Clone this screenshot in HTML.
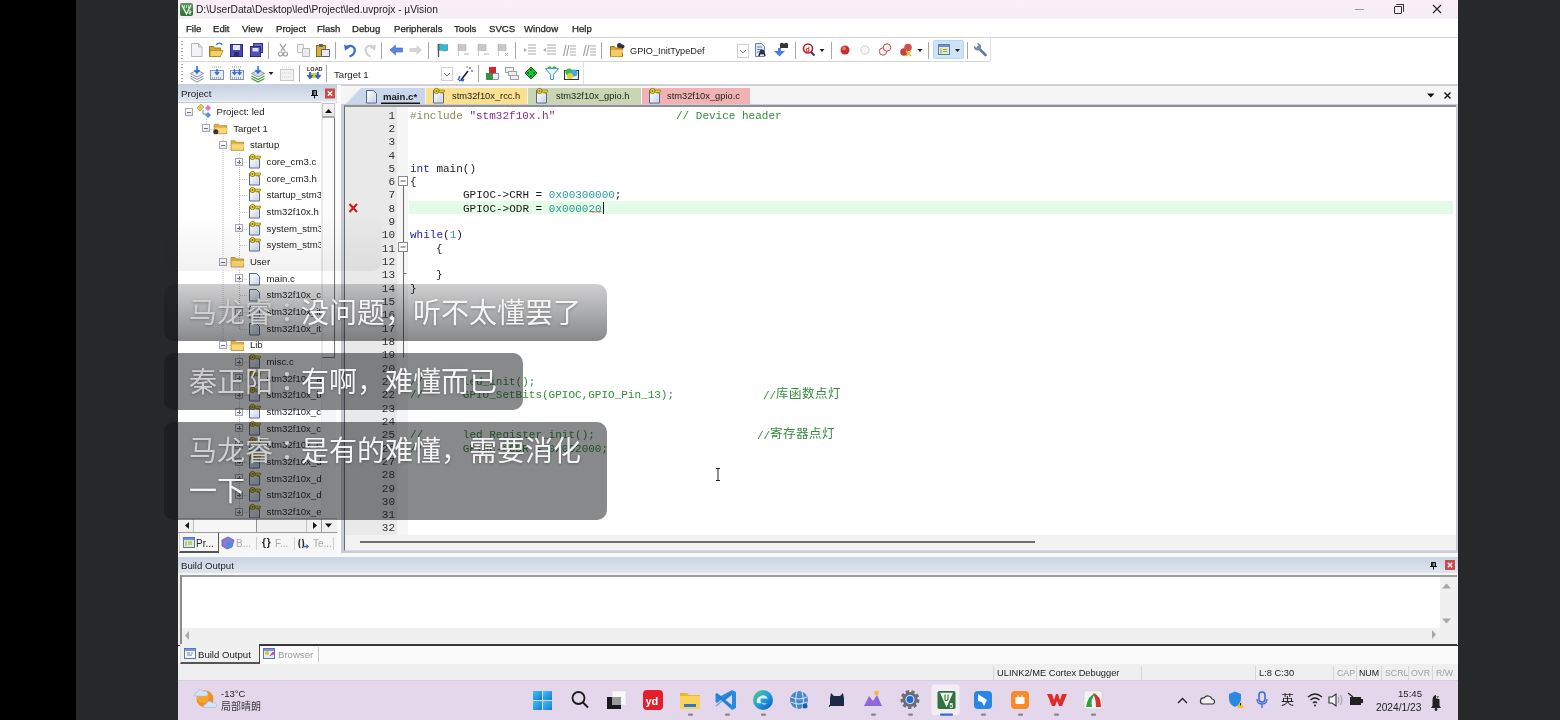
<!DOCTYPE html>
<html lang="zh-CN"><head><meta charset="utf-8">
<style>
*{margin:0;padding:0;box-sizing:border-box}
html,body{width:1560px;height:720px;overflow:hidden;background:#000;will-change:transform;font-family:"Liberation Sans",sans-serif;font-size:10px;color:#222}
.a{position:absolute}
.t{position:absolute;white-space:nowrap;line-height:1}
.m{position:absolute;white-space:pre;line-height:1;font-family:"Liberation Mono",monospace;font-size:11px}
svg{position:absolute;overflow:visible}
.sep{position:absolute;width:1px;background:#a8a8a8}
.ln{position:absolute;left:369px;width:26px;text-align:right;font-family:"Liberation Mono",monospace;font-size:11px;line-height:1;color:#333}
.tr{position:absolute;white-space:nowrap;line-height:1.3;font-size:9.6px;color:#222;overflow:hidden;right:1239px}
.exp{position:absolute;width:8px;height:8px;border:1px solid #a8a8ac;background:linear-gradient(#fff,#e6e8f0)}
.exp:before{content:"";position:absolute;left:1px;top:2.5px;width:4px;height:1px;background:#6a7088}
.exp.p:after{content:"";position:absolute;left:2.5px;top:1px;width:1px;height:4px;background:#6a7088}
.fi{position:absolute;width:11px;height:13px;border:1px solid #5b6b8a;background:linear-gradient(135deg,#fff,#cdd6e6);border-radius:1px}
.key{position:absolute;width:9px;height:5px}
.key:before{content:"";position:absolute;left:0;top:0;width:5px;height:5px;border-radius:50%;background:#f4f0c0;border:1.5px solid #c8b418}
.key:after{content:"";position:absolute;left:5px;top:2px;width:5px;height:3px;border-top:1.5px solid #c0ac18;border-right:1px solid #c0ac18}
.fold{position:absolute;width:9px;height:9px;border:1px solid #888;background:#fff}
.fold:before{content:"";position:absolute;left:1px;top:3px;width:5px;height:1px;background:#555}
.sub{position:absolute;border-radius:10px;background:rgba(40,40,42,.55)}
.subt{position:absolute;white-space:nowrap;line-height:1;color:#f4f4f4;font-size:28px;text-shadow:0 1px 3px rgba(0,0,0,.3)}
</style></head><body>
<div class="a" style="left:76px;top:0;width:1484px;height:720px;background:#27282a"></div>
<div class="a" style="left:178px;top:0;width:1280px;height:720px;background:#f0f0f0"></div>

<!-- ============ TITLE BAR ============ -->
<div class="a" style="left:178px;top:0;width:1280px;height:19px;background:linear-gradient(#fcedf8,#f4eef4)"></div>
<div class="a" style="left:180px;top:3px;width:13px;height:13px;border-radius:2px;background:linear-gradient(#5a9a5a,#2f6e35)"></div>
<svg style="left:0;top:0" width="1560" height="720"><path d="M182 5l4.5 9 4.5-9" fill="none" stroke="#e8f4e0" stroke-width="1.4"/><path d="M184.5 5v3M186.5 5v3M188.5 5v3" stroke="#d0e8d0" stroke-width=".8"/><path d="M189 11h2v1.5h-2v1.5h2" fill="none" stroke="#fff" stroke-width=".8"/></svg>
<div class="t" style="left:196px;top:5px;font-size:10.2px;color:#1c1c1c">D:\UserData\Desktop\led\Project\led.uvprojx - µVision</div>
<div class="a" style="left:1355px;top:9px;width:9px;height:1px;background:#9a9a9a"></div>
<div class="a" style="left:1394px;top:6px;width:8px;height:8px;border:1px solid #333;border-radius:1px"></div>
<div class="a" style="left:1396px;top:4px;width:8px;height:8px;border-top:1px solid #333;border-right:1px solid #333;border-radius:1px"></div>
<svg style="left:1432px;top:4px" width="10" height="10"><path d="M1 1L9 9M9 1L1 9" stroke="#222" stroke-width="1.1"/></svg>

<!-- ============ MENU BAR ============ -->
<div class="a" style="left:178px;top:19px;width:1280px;height:19px;background:#fff"></div>
<div class="a" style="left:178px;top:37px;width:1280px;height:2px;background:#d8d8d8"></div>
<div class="t" style="left:186px;top:24px;font-size:9.6px;color:#1e1e1e;-webkit-text-stroke:.25px #1e1e1e">File</div>
<div class="t" style="left:213px;top:24px;font-size:9.6px;color:#1e1e1e;-webkit-text-stroke:.25px #1e1e1e">Edit</div>
<div class="t" style="left:242px;top:24px;font-size:9.6px;color:#1e1e1e;-webkit-text-stroke:.25px #1e1e1e">View</div>
<div class="t" style="left:276px;top:24px;font-size:9.6px;color:#1e1e1e;-webkit-text-stroke:.25px #1e1e1e">Project</div>
<div class="t" style="left:317px;top:24px;font-size:9.6px;color:#1e1e1e;-webkit-text-stroke:.25px #1e1e1e">Flash</div>
<div class="t" style="left:352px;top:24px;font-size:9.6px;color:#1e1e1e;-webkit-text-stroke:.25px #1e1e1e">Debug</div>
<div class="t" style="left:394px;top:24px;font-size:9.6px;color:#1e1e1e;-webkit-text-stroke:.25px #1e1e1e">Peripherals</div>
<div class="t" style="left:454px;top:24px;font-size:9.6px;color:#1e1e1e;-webkit-text-stroke:.25px #1e1e1e">Tools</div>
<div class="t" style="left:489px;top:24px;font-size:9.6px;color:#1e1e1e;-webkit-text-stroke:.25px #1e1e1e">SVCS</div>
<div class="t" style="left:524px;top:24px;font-size:9.6px;color:#1e1e1e;-webkit-text-stroke:.25px #1e1e1e">Window</div>
<div class="t" style="left:572px;top:24px;font-size:9.6px;color:#1e1e1e;-webkit-text-stroke:.25px #1e1e1e">Help</div>

<!-- ============ TOOLBARS ============ -->
<div class="a" style="left:178px;top:38px;width:1280px;height:47px;background:#fff"></div>
<div class="a" style="left:178px;top:61px;width:812px;height:1px;background:#d8d8d8"></div>
<div class="a" style="left:990px;top:38px;width:1px;height:23px;background:#e2e2e2"></div>
<div class="a" style="left:178px;top:84px;width:1280px;height:2px;background:#d0d4da"></div>
<div class="a" style="left:583px;top:62px;width:1px;height:22px;background:#e2e2e2"></div>
<!-- grippers -->
<div class="a" style="left:181px;top:41px;width:2px;height:18px;background:repeating-linear-gradient(#aaa 0 1px,transparent 1px 3.5px)"></div>
<div class="a" style="left:181px;top:64px;width:2px;height:18px;background:repeating-linear-gradient(#aaa 0 1px,transparent 1px 3.5px)"></div>
<!-- separators tb1 -->
<div class="sep" style="left:268px;top:42px;height:17px"></div>
<div class="sep" style="left:335px;top:42px;height:17px"></div>
<div class="sep" style="left:381px;top:42px;height:17px"></div>
<div class="sep" style="left:428px;top:42px;height:17px"></div>
<div class="sep" style="left:515px;top:42px;height:17px"></div>
<div class="sep" style="left:601px;top:42px;height:17px"></div>
<div class="sep" style="left:795px;top:42px;height:17px"></div>
<div class="sep" style="left:831px;top:42px;height:17px"></div>
<div class="sep" style="left:928px;top:42px;height:17px"></div>
<div class="sep" style="left:967px;top:42px;height:17px"></div>
<!-- separators tb2 -->
<div class="sep" style="left:299px;top:65px;height:17px"></div>
<div class="sep" style="left:326px;top:65px;height:17px"></div>
<div class="sep" style="left:478px;top:65px;height:17px"></div>
<svg style="left:0;top:0" width="1560" height="720">
<!-- new -->
<path d="M191.5 43.5h7l3.5 3.5v9.5h-10.5z" fill="#f4f4f6" stroke="#b8b8bc"/>
<path d="M198.5 43.5v3.5h3.5" fill="#ddd" stroke="#b8b8bc"/>
<!-- open -->
<path d="M209.5 46.5h4l1 1.5h6v8.5h-11z" fill="#d9a830" stroke="#a07818"/>
<path d="M210 50.5h13l-2.5 6h-10.5z" fill="#f6d068" stroke="#b08820" stroke-width=".8"/>
<path d="M216 45c2-2.5 5-2.5 6 0" fill="none" stroke="#3a70b8" stroke-width="1.2"/>
<!-- save -->
<rect x="230.5" y="44.5" width="12" height="12" fill="#4a4ab0" stroke="#2a2a80"/>
<rect x="233" y="45" width="7" height="5" fill="#e8e8f4"/>
<rect x="234" y="52" width="5" height="4" fill="#2a2a70"/>
<!-- save all -->
<rect x="253.5" y="43.5" width="9" height="9" fill="#6a6ac8" stroke="#34348a"/>
<rect x="250.5" y="46.5" width="10" height="10" fill="#5050b8" stroke="#2a2a80"/>
<rect x="252.5" y="48" width="6" height="3.5" fill="#e0e0f0"/>
<!-- cut -->
<path d="M280 44l5 7M286 44l-5 7" stroke="#a8a8a8" stroke-width="1.3"/>
<circle cx="280.5" cy="54" r="2" fill="none" stroke="#a0a0a0" stroke-width="1.2"/>
<circle cx="285.5" cy="54" r="2" fill="none" stroke="#a0a0a0" stroke-width="1.2"/>
<!-- copy -->
<path d="M297.5 44.5h6v8h-6z" fill="#f2f2f2" stroke="#c0c0c0"/>
<path d="M302.5 48.5h7v8h-7z" fill="#ececec" stroke="#b8b8b8"/>
<!-- paste -->
<rect x="316.5" y="45.5" width="9" height="11" fill="#d8b040" stroke="#8a6a18"/>
<rect x="319" y="44" width="4" height="3" fill="#606060"/>
<path d="M321.5 49.5h8v7h-8z" fill="#e6eaf0" stroke="#5a6070"/>
<!-- undo -->
<path d="M347 46.5c5-2 9 1 7.5 5.5-1 3-3.5 4-5 4.5" fill="none" stroke="#3a6ed0" stroke-width="2.2"/>
<path d="M344 44.5l1 6 5-3z" fill="#3a6ed0"/>
<!-- redo -->
<path d="M373 46.5c-5-2-8.5 1-7 5.5 1 3 3 4 4.5 4.5" fill="none" stroke="#cfcfcf" stroke-width="2"/>
<path d="M376 44.5l-1 6-5-3z" fill="#cfcfcf"/>
<!-- back -->
<path d="M390 50l5.5-5v3h7v4h-7v3z" fill="#5a86e0" stroke="#3a66c0" stroke-width=".6"/>
<!-- fwd -->
<path d="M422 50l-5.5-5v3h-7v4h7v3z" fill="#d4d4d4"/>
<!-- flag -->
<path d="M438 44.5c3-1.5 6 1.5 9.5 0v6c-3.5 1.5-6.5-1.5-9.5 0z" fill="#38b8d0" stroke="#2a8ea8" stroke-width=".7"/>
<path d="M438.5 44v13" stroke="#555" stroke-width="1.3"/>
<!-- gray bookmarks -->
<g fill="#c8c8c8" stroke="#b4b4b4" stroke-width=".7">
<path d="M458 44.5c2.5-1 5 1 8 0v6c-3 1-5.5-1-8 0z"/><path d="M458.5 44v12" />
<path d="M478 44.5c2.5-1 5 1 8 0v6c-3 1-5.5-1-8 0z"/><path d="M478.5 44v12" />
<path d="M498 44.5c2.5-1 5 1 8 0v6c-3 1-5.5-1-8 0z"/><path d="M498.5 44v12" />
</g>
<path d="M464 54h5M484 54h5M505 53l3 3M508 53l-3 3" stroke="#b0b0b0" stroke-width="1"/>
<!-- indent -->
<g stroke="#a8a8a8" stroke-width="1.2">
<path d="M528 45h8M528 48h8M528 51h8M528 54h8"/><path d="M547 45h9M547 48h9M547 51h9M547 54h9"/>
<path d="M570 46h6M570 49h6M570 52h6M570 55h6"/><path d="M590 46h6M590 49h6M590 52h6M590 55h6"/>
</g>
<path d="M524 48l3 2-3 2z" fill="#b0b0b0"/><path d="M546 48l-3 2 3 2z" fill="#b0b0b0"/>
<path d="M566 45l-2.5 11M569 45l-2.5 11M586 45l-2.5 11M589 45l-2.5 11" stroke="#9a9a9a" stroke-width="1.1"/>
<!-- find in files -->
<path d="M610.5 46.5h4l1 1.5h7v8.5h-12z" fill="#d8a838" stroke="#9a7418"/>
<path d="M611 50h12.5l-2 6.5h-10.5z" fill="#f4cc60"/>
<circle cx="619.5" cy="45.5" r="2.5" fill="#333"/><circle cx="622.5" cy="46.5" r="2" fill="#333"/>
<!-- combo dropdown -->
<rect x="737.5" y="44.5" width="11" height="13" fill="#fff" stroke="#d0d0d0"/>
<path d="M740 50l3 3 3-3" fill="none" stroke="#888" stroke-width="1"/>
<!-- doc magnifier -->
<path d="M755.5 43.5h6l3 3v10h-9z" fill="#dde6f6" stroke="#6a86c0"/>
<path d="M757 47h5M757 49.5h5M757 52h4" stroke="#5a7ac8" stroke-width=".9"/>
<circle cx="762" cy="52" r="2.5" fill="#333"/><path d="M760 53l-1 3M764 53l1 3" stroke="#222" stroke-width="1.4"/>
<!-- blue arrows -->
<path d="M774 51h4v-3h3v3h4l-5.5 5.5z" fill="#4a80e0"/>
<circle cx="782" cy="45" r="2.2" fill="#333"/><circle cx="786" cy="45" r="2.2" fill="#333"/><path d="M780 47h8" stroke="#333" stroke-width="2"/>
<!-- debug magnifier -->
<circle cx="808" cy="48.5" r="4.5" fill="#fff" stroke="#c02020" stroke-width="1.6"/>
<path d="M811 52l3.5 3.5" stroke="#203880" stroke-width="2"/>
<text x="805.5" y="51.5" font-size="7" font-weight="bold" fill="#d02020" font-family="Liberation Sans">d</text>
<path d="M819.5 49h5l-2.5 3z" fill="#222"/>
<!-- breakpoints -->
<circle cx="845" cy="50" r="4.5" fill="#c83030"/><circle cx="844" cy="48.5" r="2" fill="#e87070"/>
<circle cx="865" cy="50" r="4.2" fill="#f6f6f6" stroke="#d0d0d0" stroke-width="1"/>
<circle cx="883" cy="51.5" r="3.7" fill="#fff4f4" stroke="#c04848" stroke-width="1"/>
<circle cx="887" cy="47.5" r="3.7" fill="#fff4f4" stroke="#c04848" stroke-width="1"/>
<circle cx="904" cy="52" r="3.8" fill="#c84040"/><circle cx="908" cy="47.5" r="3.8" fill="#d05050"/>
<path d="M906 51l5 5M911 51l-5 5" stroke="#d8c820" stroke-width="1.6"/>
<path d="M917.5 49h5l-2.5 3z" fill="#222"/>
<!-- highlighted window btn -->
<rect x="933.5" y="40.5" width="30" height="18" rx="1.5" fill="#cde4f7" stroke="#b8d8f2"/>
<rect x="938.5" y="44.5" width="11" height="10" fill="#e6ecc0" stroke="#5878b8"/>
<rect x="939" y="45" width="10" height="2" fill="#6a90d8"/>
<path d="M941 48.5v5M943 49.5h4M943 51.5h4" stroke="#8a9a30" stroke-width=".9"/>
<path d="M955 49h5l-2.5 3z" fill="#222"/>
<!-- wrench -->
<path d="M979 48.5l6.5 6.5" stroke="#6a7a98" stroke-width="2.8" stroke-linecap="round"/>
<circle cx="977.5" cy="46.8" r="3.6" fill="#7a8aa8"/>
<path d="M973 44.5l2.8-2.2 2.6 2.6-2.2 2.8z" fill="#fff"/>
</svg>
<div class="t" style="left:630px;top:47px;font-size:9.2px;color:#222">GPIO_InitTypeDef</div>

<svg style="left:0;top:0" width="1560" height="720">
<!-- translate -->
<path d="M190.5 73.5l6.5-3.5 6.5 3.5-6.5 3.5z" fill="#f0f0f4" stroke="#8890a8"/>
<path d="M190.5 76l6.5 3.5 6.5-3.5M190.5 78.5l6.5 3.5 6.5-3.5" fill="none" stroke="#8890a8"/>
<path d="M197 66v6M194.5 70l2.5 3 2.5-3" fill="none" stroke="#2a70d8" stroke-width="1.6"/>
<!-- build -->
<rect x="210.5" y="70.5" width="13" height="9" fill="#e8ecf4" stroke="#8a94a8"/>
<path d="M212 67h10" stroke="#999" stroke-dasharray="1 1"/>
<path d="M212 78h10" stroke="#667" stroke-dasharray="1 1"/>
<path d="M217 69v5M215 72l2 2.5 2-2.5" fill="none" stroke="#2a70d8" stroke-width="1.4"/>
<!-- rebuild -->
<rect x="230.5" y="70.5" width="13" height="9" fill="#e8ecf4" stroke="#8a94a8"/>
<path d="M232 67h10" stroke="#999" stroke-dasharray="1 1"/>
<path d="M232 78h10" stroke="#667" stroke-dasharray="1 1"/>
<path d="M234.5 69v5M232.5 72l2 2.5 2-2.5M239.5 69v5M237.5 72l2 2.5 2-2.5" fill="none" stroke="#2a70d8" stroke-width="1.3"/>
<!-- batch -->
<path d="M251.5 73.5l6.5-3.5 6.5 3.5-6.5 3.5z" fill="#d8dce8" stroke="#8890a8"/>
<path d="M251.5 76l6.5 3.5 6.5-3.5M251.5 78.5l6.5 3.5 6.5-3.5" fill="none" stroke="#4a9a3a" stroke-width="1.3"/>
<path d="M258 66v6M255.5 70l2.5 3 2.5-3" fill="none" stroke="#2a70d8" stroke-width="1.5"/>
<path d="M268.5 72h5l-2.5 3z" fill="#222"/>
<!-- stop build gray -->
<rect x="280.5" y="69.5" width="13" height="11" fill="#f2f2f2" stroke="#c8c8c8"/>
<path d="M282 67h10M282 73h10M282 77h10" stroke="#d0d0d0" stroke-dasharray="1 1"/>
<!-- LOAD -->
<text x="307" y="71" font-size="5.5" font-weight="bold" fill="#222" font-family="Liberation Sans">LOAD</text>
<rect x="311" y="73" width="7" height="5" fill="#c8d820"/>
<path d="M310 72v5M307.5 75l2.5 3 2.5-3M318 72v5M315.5 75l2.5 3 2.5-3" fill="none" stroke="#2a60d0" stroke-width="1.8"/>
<!-- target dropdown -->
<rect x="441.5" y="67.5" width="11" height="13" fill="#fff" stroke="#d0d0d0"/>
<path d="M444 73l3 3 3-3" fill="none" stroke="#888" stroke-width="1"/>
<!-- wand -->
<path d="M461 80l7-9" stroke="#222" stroke-width="1.6"/>
<path d="M460 76l-2 4M464 79l-2 2M459 80.5h5" stroke="#2a6ad0" stroke-width="1.6"/>
<circle cx="470" cy="68" r=".9" fill="#d03030"/><circle cx="472" cy="71" r=".9" fill="#3070d0"/><circle cx="467" cy="67" r=".8" fill="#30a030"/>
<!-- components -->
<rect x="489" y="67" width="7" height="6" fill="#d02828"/>
<rect x="486.5" y="73.5" width="6" height="6" fill="#2a9a3a" stroke="#1a5a20" stroke-width=".6"/>
<rect x="492.5" y="73.5" width="6" height="6" fill="#e8eefa" stroke="#3050a0" stroke-width=".6"/>
<!-- windows -->
<rect x="505.5" y="67.5" width="8" height="5" fill="#f0f0f0" stroke="#a0a0a0"/>
<rect x="508.5" y="71.5" width="8" height="4" fill="#f0f0f0" stroke="#a0a0a0"/>
<rect x="510.5" y="75.5" width="8" height="4" fill="#f0f0f0" stroke="#a0a0a0"/>
<!-- green diamond -->
<path d="M531 67l6 6-6 6-6-6z" fill="#20c030" stroke="#107018"/>
<circle cx="531" cy="70" r=".9" fill="#063"/><circle cx="528" cy="73" r=".9" fill="#063"/><circle cx="534" cy="73" r=".9" fill="#063"/><circle cx="531" cy="76" r=".9" fill="#063"/>
<!-- funnel -->
<path d="M545.5 68.5h13l-5 6v5h-3v-5z" fill="#e6f4f6" stroke="#4aa0b0"/>
<path d="M547 68l3-2 2 2 2-2 3 2" fill="#30c040"/>
<!-- multi -->
<rect x="564.5" y="70.5" width="14" height="9" fill="#f0f0f0" stroke="#333"/>
<circle cx="569" cy="72" r="3.5" fill="#3ab848"/><circle cx="574" cy="73" r="3.5" fill="#40a8e0"/><circle cx="570" cy="76" r="3" fill="#e0d030"/>
</svg>
<div class="t" style="left:334px;top:70px;font-size:9.6px;color:#222">Target 1</div>


<!-- project header -->
<div class="a" style="left:178px;top:84px;width:160px;height:17px;background:linear-gradient(#c6d1df,#dde5ef)"></div>
<div class="a" style="left:178px;top:101px;width:160px;height:1px;background:#eef1f5"></div>
<div class="t" style="left:181px;top:89px;font-size:9.8px;color:#222">Project</div>
<svg style="left:0;top:0" width="1560" height="720"><path d="M312.5 90.5h4v5h-4z" fill="#333" stroke="#111"/><path d="M315 91v4" stroke="#fff" stroke-width=".8"/><path d="M311 95.5h7M314.5 96v2.5" stroke="#111"/><rect x="325" y="88.5" width="10" height="10" fill="#cc4a4a"/><path d="M327.8 91.3l4.4 4.4M332.2 91.3l-4.4 4.4" stroke="#fff" stroke-width="1.3"/></svg>
<!-- tree --><svg style="left:0;top:0" width="0" height="0"><defs><linearGradient id="fg" x1="0" y1="0" x2="1" y2="1"><stop offset="0" stop-color="#ffffff"/><stop offset="1" stop-color="#c8d2e8"/></linearGradient></defs></svg>
<div class="a" style="left:178px;top:102px;width:160px;height:431px;background:#fff;border-top:1px solid #c8c8c8;border-right:1px solid #c8c8c8"></div>
<svg style="left:0;top:0" width="1560" height="720"><g stroke="#c4c4c4" stroke-dasharray="1 1" stroke-width="1"><path d="M206.5 119v10M223 136v125M239.5 153v110M239.5 270v60M223 270v75M239.5 353v160"/><path d="M206.6 129.5h8"/><path d="M223.2 145.5h8"/><path d="M239.8 162.5h8"/><path d="M239.8 179.5h8"/><path d="M239.8 195.5h8"/><path d="M239.8 212.5h8"/><path d="M239.8 229.5h8"/><path d="M239.8 245.5h8"/><path d="M223.2 262.5h8"/><path d="M239.8 279.5h8"/><path d="M239.8 295.5h8"/><path d="M239.8 312.5h8"/><path d="M239.8 329.5h8"/><path d="M223.2 345.5h8"/><path d="M239.8 362.5h8"/><path d="M239.8 379.5h8"/><path d="M239.8 395.5h8"/><path d="M239.8 412.5h8"/><path d="M239.8 429.5h8"/><path d="M239.8 445.5h8"/><path d="M239.8 462.5h8"/><path d="M239.8 479.5h8"/><path d="M239.8 495.5h8"/><path d="M239.8 512.5h8"/></g></svg>
<div class="exp" style="left:185px;top:108px"></div>
<svg style="left:0;top:0" width="1560" height="720"><path d="M197.0 108.0l4-4 3 3-4 4z" fill="#e8c850" stroke="#b09020" stroke-width=".6"/><path d="M205.0 108.0l3-3 3 3-3 3z" fill="#e070d0"/><path d="M205.0 115.0l3-3 3 3-3 3z" fill="#5090e0"/><path d="M203.0 110.0v4h3" fill="none" stroke="#5a8ad0"/></svg>
<div class="tr" style="left:216.5px;top:106.0px">Project: led</div>
<div class="exp" style="left:202px;top:124px"></div>
<svg style="left:0;top:0" width="1560" height="720"><path d="M214.3 124.2h4l1.5 1.5h7v8h-12.5z" fill="#e0b040" stroke="#b08828" stroke-width=".8"/><path d="M214.8 127.7h12.5l-1 5.5h-11.5z" fill="#fad878"/><circle cx="215.8" cy="131.7" r="2.5" fill="#333"/></svg>
<div class="tr" style="left:233.2px;top:122.7px">Target 1</div>
<div class="exp" style="left:219px;top:141px"></div>
<svg style="left:0;top:0" width="1560" height="720"><path d="M231.1 140.8h4l1.5 1.5h7v8h-12.5z" fill="#e0b040" stroke="#b08828" stroke-width=".8"/><path d="M231.6 144.3h12.5l-1 5.5h-11.5z" fill="#fad878"/></svg>
<div class="tr" style="left:249.9px;top:139.3px">startup</div>
<div class="exp p" style="left:235px;top:158px"></div>
<svg style="left:0;top:0" width="1560" height="720"><defs></defs><path d="M249.5 156.5h7l3 3v8.5h-10z" fill="#e8ecf6" stroke="#56688a"/><path d="M250.5 157.5h5.5l2.5 2.5v7h-8z" fill="url(#fg)"/></svg>
<svg style="left:0;top:0" width="1560" height="720"><circle cx="252.5" cy="157" r="2.6" fill="#f0e040" stroke="#807010" stroke-width=".9"/><circle cx="252.5" cy="157" r=".9" fill="#807010"/><path d="M255 156h5.5v2h-1v1.5h-1.2v-1.5h-1v1h-1.2v-1h-1.1z" fill="#e8d830" stroke="#807010" stroke-width=".6"/></svg>
<div class="tr" style="left:266.6px;top:156.0px">core_cm3.c</div>
<svg style="left:0;top:0" width="1560" height="720"><defs></defs><path d="M249.5 173.5h7l3 3v8.5h-10z" fill="#e8ecf6" stroke="#56688a"/><path d="M250.5 174.5h5.5l2.5 2.5v7h-8z" fill="url(#fg)"/></svg>
<svg style="left:0;top:0" width="1560" height="720"><circle cx="252.5" cy="174" r="2.6" fill="#f0e040" stroke="#807010" stroke-width=".9"/><circle cx="252.5" cy="174" r=".9" fill="#807010"/><path d="M255 173h5.5v2h-1v1.5h-1.2v-1.5h-1v1h-1.2v-1h-1.1z" fill="#e8d830" stroke="#807010" stroke-width=".6"/></svg>
<div class="tr" style="left:266.6px;top:172.7px">core_cm3.h</div>
<svg style="left:0;top:0" width="1560" height="720"><defs></defs><path d="M249.5 189.5h7l3 3v8.5h-10z" fill="#e8ecf6" stroke="#56688a"/><path d="M250.5 190.5h5.5l2.5 2.5v7h-8z" fill="url(#fg)"/></svg>
<svg style="left:0;top:0" width="1560" height="720"><circle cx="252.5" cy="190" r="2.6" fill="#f0e040" stroke="#807010" stroke-width=".9"/><circle cx="252.5" cy="190" r=".9" fill="#807010"/><path d="M255 189h5.5v2h-1v1.5h-1.2v-1.5h-1v1h-1.2v-1h-1.1z" fill="#e8d830" stroke="#807010" stroke-width=".6"/></svg>
<div class="tr" style="left:266.6px;top:189.4px">startup_stm32f10x</div>
<svg style="left:0;top:0" width="1560" height="720"><defs></defs><path d="M249.5 206.5h7l3 3v8.5h-10z" fill="#e8ecf6" stroke="#56688a"/><path d="M250.5 207.5h5.5l2.5 2.5v7h-8z" fill="url(#fg)"/></svg>
<svg style="left:0;top:0" width="1560" height="720"><circle cx="252.5" cy="207" r="2.6" fill="#f0e040" stroke="#807010" stroke-width=".9"/><circle cx="252.5" cy="207" r=".9" fill="#807010"/><path d="M255 206h5.5v2h-1v1.5h-1.2v-1.5h-1v1h-1.2v-1h-1.1z" fill="#e8d830" stroke="#807010" stroke-width=".6"/></svg>
<div class="tr" style="left:266.6px;top:206.0px">stm32f10x.h</div>
<div class="exp p" style="left:235px;top:224px"></div>
<svg style="left:0;top:0" width="1560" height="720"><defs></defs><path d="M249.5 223.5h7l3 3v8.5h-10z" fill="#e8ecf6" stroke="#56688a"/><path d="M250.5 224.5h5.5l2.5 2.5v7h-8z" fill="url(#fg)"/></svg>
<svg style="left:0;top:0" width="1560" height="720"><circle cx="252.5" cy="224" r="2.6" fill="#f0e040" stroke="#807010" stroke-width=".9"/><circle cx="252.5" cy="224" r=".9" fill="#807010"/><path d="M255 223h5.5v2h-1v1.5h-1.2v-1.5h-1v1h-1.2v-1h-1.1z" fill="#e8d830" stroke="#807010" stroke-width=".6"/></svg>
<div class="tr" style="left:266.6px;top:222.7px">system_stm32f10x</div>
<svg style="left:0;top:0" width="1560" height="720"><defs></defs><path d="M249.5 239.5h7l3 3v8.5h-10z" fill="#e8ecf6" stroke="#56688a"/><path d="M250.5 240.5h5.5l2.5 2.5v7h-8z" fill="url(#fg)"/></svg>
<svg style="left:0;top:0" width="1560" height="720"><circle cx="252.5" cy="240" r="2.6" fill="#f0e040" stroke="#807010" stroke-width=".9"/><circle cx="252.5" cy="240" r=".9" fill="#807010"/><path d="M255 239h5.5v2h-1v1.5h-1.2v-1.5h-1v1h-1.2v-1h-1.1z" fill="#e8d830" stroke="#807010" stroke-width=".6"/></svg>
<div class="tr" style="left:266.6px;top:239.4px">system_stm32f10x</div>
<div class="exp" style="left:219px;top:258px"></div>
<svg style="left:0;top:0" width="1560" height="720"><path d="M231.1 257.5h4l1.5 1.5h7v8h-12.5z" fill="#e0b040" stroke="#b08828" stroke-width=".8"/><path d="M231.6 261.0h12.5l-1 5.5h-11.5z" fill="#fad878"/></svg>
<div class="tr" style="left:249.9px;top:256.0px">User</div>
<div class="exp p" style="left:235px;top:274px"></div>
<svg style="left:0;top:0" width="1560" height="720"><defs></defs><path d="M249.5 273.5h7l3 3v8.5h-10z" fill="#e8ecf6" stroke="#56688a"/><path d="M250.5 274.5h5.5l2.5 2.5v7h-8z" fill="url(#fg)"/></svg>
<div class="tr" style="left:266.6px;top:272.7px">main.c</div>
<svg style="left:0;top:0" width="1560" height="720"><defs></defs><path d="M249.5 289.5h7l3 3v8.5h-10z" fill="#e8ecf6" stroke="#56688a"/><path d="M250.5 290.5h5.5l2.5 2.5v7h-8z" fill="url(#fg)"/></svg>
<div class="tr" style="left:266.6px;top:289.4px">stm32f10x_conf</div>
<div class="exp p" style="left:235px;top:308px"></div>
<svg style="left:0;top:0" width="1560" height="720"><defs></defs><path d="M249.5 306.5h7l3 3v8.5h-10z" fill="#e8ecf6" stroke="#56688a"/><path d="M250.5 307.5h5.5l2.5 2.5v7h-8z" fill="url(#fg)"/></svg>
<div class="tr" style="left:266.6px;top:306.0px">stm32f10x_it.c</div>
<svg style="left:0;top:0" width="1560" height="720"><defs></defs><path d="M249.5 323.5h7l3 3v8.5h-10z" fill="#e8ecf6" stroke="#56688a"/><path d="M250.5 324.5h5.5l2.5 2.5v7h-8z" fill="url(#fg)"/></svg>
<div class="tr" style="left:266.6px;top:322.7px">stm32f10x_it.h</div>
<div class="exp" style="left:219px;top:341px"></div>
<svg style="left:0;top:0" width="1560" height="720"><path d="M231.1 340.9h4l1.5 1.5h7v8h-12.5z" fill="#e0b040" stroke="#b08828" stroke-width=".8"/><path d="M231.6 344.4h12.5l-1 5.5h-11.5z" fill="#fad878"/></svg>
<div class="tr" style="left:249.9px;top:339.4px">Lib</div>
<div class="exp p" style="left:235px;top:358px"></div>
<svg style="left:0;top:0" width="1560" height="720"><defs></defs><path d="M249.5 356.5h7l3 3v8.5h-10z" fill="#e8ecf6" stroke="#56688a"/><path d="M250.5 357.5h5.5l2.5 2.5v7h-8z" fill="url(#fg)"/></svg>
<svg style="left:0;top:0" width="1560" height="720"><circle cx="252.5" cy="357" r="2.6" fill="#f0e040" stroke="#807010" stroke-width=".9"/><circle cx="252.5" cy="357" r=".9" fill="#807010"/><path d="M255 356h5.5v2h-1v1.5h-1.2v-1.5h-1v1h-1.2v-1h-1.1z" fill="#e8d830" stroke="#807010" stroke-width=".6"/></svg>
<div class="tr" style="left:266.6px;top:356.1px">misc.c</div>
<div class="exp p" style="left:235px;top:374px"></div>
<svg style="left:0;top:0" width="1560" height="720"><defs></defs><path d="M249.5 373.5h7l3 3v8.5h-10z" fill="#e8ecf6" stroke="#56688a"/><path d="M250.5 374.5h5.5l2.5 2.5v7h-8z" fill="url(#fg)"/></svg>
<svg style="left:0;top:0" width="1560" height="720"><circle cx="252.5" cy="374" r="2.6" fill="#f0e040" stroke="#807010" stroke-width=".9"/><circle cx="252.5" cy="374" r=".9" fill="#807010"/><path d="M255 373h5.5v2h-1v1.5h-1.2v-1.5h-1v1h-1.2v-1h-1.1z" fill="#e8d830" stroke="#807010" stroke-width=".6"/></svg>
<div class="tr" style="left:266.6px;top:372.7px">stm32f10x_adc</div>
<div class="exp p" style="left:235px;top:391px"></div>
<svg style="left:0;top:0" width="1560" height="720"><defs></defs><path d="M249.5 389.5h7l3 3v8.5h-10z" fill="#e8ecf6" stroke="#56688a"/><path d="M250.5 390.5h5.5l2.5 2.5v7h-8z" fill="url(#fg)"/></svg>
<svg style="left:0;top:0" width="1560" height="720"><circle cx="252.5" cy="390" r="2.6" fill="#f0e040" stroke="#807010" stroke-width=".9"/><circle cx="252.5" cy="390" r=".9" fill="#807010"/><path d="M255 389h5.5v2h-1v1.5h-1.2v-1.5h-1v1h-1.2v-1h-1.1z" fill="#e8d830" stroke="#807010" stroke-width=".6"/></svg>
<div class="tr" style="left:266.6px;top:389.4px">stm32f10x_bkp</div>
<div class="exp p" style="left:235px;top:408px"></div>
<svg style="left:0;top:0" width="1560" height="720"><defs></defs><path d="M249.5 406.5h7l3 3v8.5h-10z" fill="#e8ecf6" stroke="#56688a"/><path d="M250.5 407.5h5.5l2.5 2.5v7h-8z" fill="url(#fg)"/></svg>
<svg style="left:0;top:0" width="1560" height="720"><circle cx="252.5" cy="407" r="2.6" fill="#f0e040" stroke="#807010" stroke-width=".9"/><circle cx="252.5" cy="407" r=".9" fill="#807010"/><path d="M255 406h5.5v2h-1v1.5h-1.2v-1.5h-1v1h-1.2v-1h-1.1z" fill="#e8d830" stroke="#807010" stroke-width=".6"/></svg>
<div class="tr" style="left:266.6px;top:406.1px">stm32f10x_can</div>
<div class="exp p" style="left:235px;top:424px"></div>
<svg style="left:0;top:0" width="1560" height="720"><defs></defs><path d="M249.5 423.5h7l3 3v8.5h-10z" fill="#e8ecf6" stroke="#56688a"/><path d="M250.5 424.5h5.5l2.5 2.5v7h-8z" fill="url(#fg)"/></svg>
<svg style="left:0;top:0" width="1560" height="720"><circle cx="252.5" cy="424" r="2.6" fill="#f0e040" stroke="#807010" stroke-width=".9"/><circle cx="252.5" cy="424" r=".9" fill="#807010"/><path d="M255 423h5.5v2h-1v1.5h-1.2v-1.5h-1v1h-1.2v-1h-1.1z" fill="#e8d830" stroke="#807010" stroke-width=".6"/></svg>
<div class="tr" style="left:266.6px;top:422.7px">stm32f10x_cec</div>
<div class="exp p" style="left:235px;top:441px"></div>
<svg style="left:0;top:0" width="1560" height="720"><defs></defs><path d="M249.5 439.5h7l3 3v8.5h-10z" fill="#e8ecf6" stroke="#56688a"/><path d="M250.5 440.5h5.5l2.5 2.5v7h-8z" fill="url(#fg)"/></svg>
<svg style="left:0;top:0" width="1560" height="720"><circle cx="252.5" cy="440" r="2.6" fill="#f0e040" stroke="#807010" stroke-width=".9"/><circle cx="252.5" cy="440" r=".9" fill="#807010"/><path d="M255 439h5.5v2h-1v1.5h-1.2v-1.5h-1v1h-1.2v-1h-1.1z" fill="#e8d830" stroke="#807010" stroke-width=".6"/></svg>
<div class="tr" style="left:266.6px;top:439.4px">stm32f10x_crc</div>
<div class="exp p" style="left:235px;top:458px"></div>
<svg style="left:0;top:0" width="1560" height="720"><defs></defs><path d="M249.5 456.5h7l3 3v8.5h-10z" fill="#e8ecf6" stroke="#56688a"/><path d="M250.5 457.5h5.5l2.5 2.5v7h-8z" fill="url(#fg)"/></svg>
<svg style="left:0;top:0" width="1560" height="720"><circle cx="252.5" cy="457" r="2.6" fill="#f0e040" stroke="#807010" stroke-width=".9"/><circle cx="252.5" cy="457" r=".9" fill="#807010"/><path d="M255 456h5.5v2h-1v1.5h-1.2v-1.5h-1v1h-1.2v-1h-1.1z" fill="#e8d830" stroke="#807010" stroke-width=".6"/></svg>
<div class="tr" style="left:266.6px;top:456.1px">stm32f10x_dac</div>
<div class="exp p" style="left:235px;top:474px"></div>
<svg style="left:0;top:0" width="1560" height="720"><defs></defs><path d="M249.5 473.5h7l3 3v8.5h-10z" fill="#e8ecf6" stroke="#56688a"/><path d="M250.5 474.5h5.5l2.5 2.5v7h-8z" fill="url(#fg)"/></svg>
<svg style="left:0;top:0" width="1560" height="720"><circle cx="252.5" cy="474" r="2.6" fill="#f0e040" stroke="#807010" stroke-width=".9"/><circle cx="252.5" cy="474" r=".9" fill="#807010"/><path d="M255 473h5.5v2h-1v1.5h-1.2v-1.5h-1v1h-1.2v-1h-1.1z" fill="#e8d830" stroke="#807010" stroke-width=".6"/></svg>
<div class="tr" style="left:266.6px;top:472.7px">stm32f10x_dbg</div>
<div class="exp p" style="left:235px;top:491px"></div>
<svg style="left:0;top:0" width="1560" height="720"><defs></defs><path d="M249.5 489.5h7l3 3v8.5h-10z" fill="#e8ecf6" stroke="#56688a"/><path d="M250.5 490.5h5.5l2.5 2.5v7h-8z" fill="url(#fg)"/></svg>
<svg style="left:0;top:0" width="1560" height="720"><circle cx="252.5" cy="490" r="2.6" fill="#f0e040" stroke="#807010" stroke-width=".9"/><circle cx="252.5" cy="490" r=".9" fill="#807010"/><path d="M255 489h5.5v2h-1v1.5h-1.2v-1.5h-1v1h-1.2v-1h-1.1z" fill="#e8d830" stroke="#807010" stroke-width=".6"/></svg>
<div class="tr" style="left:266.6px;top:489.4px">stm32f10x_dma</div>
<div class="exp p" style="left:235px;top:508px"></div>
<svg style="left:0;top:0" width="1560" height="720"><defs></defs><path d="M249.5 506.5h7l3 3v8.5h-10z" fill="#e8ecf6" stroke="#56688a"/><path d="M250.5 507.5h5.5l2.5 2.5v7h-8z" fill="url(#fg)"/></svg>
<svg style="left:0;top:0" width="1560" height="720"><circle cx="252.5" cy="507" r="2.6" fill="#f0e040" stroke="#807010" stroke-width=".9"/><circle cx="252.5" cy="507" r=".9" fill="#807010"/><path d="M255 506h5.5v2h-1v1.5h-1.2v-1.5h-1v1h-1.2v-1h-1.1z" fill="#e8d830" stroke="#807010" stroke-width=".6"/></svg>
<div class="tr" style="left:266.6px;top:506.1px">stm32f10x_exti</div>
<div class="a" style="left:321px;top:102px;width:15px;height:417px;background:#f6f6f6;border-left:1px solid #ececec"></div>
<div class="a" style="left:322px;top:103px;width:13px;height:15px;background:linear-gradient(#fafafa,#e4e4e4);border:1px solid #c4c4c4;border-bottom:2px solid #a8a8a8"></div>
<svg style="left:0;top:0" width="1560" height="720"><path d="M325 113h7l-3.5-4z" fill="#111"/></svg>
<div class="a" style="left:322px;top:118px;width:13px;height:240px;background:#fbfbfb;border-right:1px solid #7a7a7a;border-bottom:1px solid #7a7a7a;border-left:1px solid #e6e6e6"></div>
<div class="a" style="left:178px;top:518px;width:160px;height:15px;background:#f0f0f0;border-top:1px solid #c8c8c8;border-bottom:1px solid #9a9a9a;border-right:1px solid #9a9a9a"></div>
<div class="a" style="left:193px;top:519px;width:64px;height:13px;background:#f6f6f6;border-right:1px solid #909090;border-left:1px solid #c0c0c0"></div>
<div class="a" style="left:306px;top:519px;width:16px;height:13px;border-left:1px solid #c0c0c0;border-right:1px solid #9a9a9a"></div>
<svg style="left:0;top:0" width="1560" height="720"><path d="M185 525.5l4-3.5v7z" fill="#111"/><path d="M317 525.5l-4-3.5v7z" fill="#111"/><path d="M325 523.5h7l-3.5 4z" fill="#111"/></svg>
<div class="a" style="left:178px;top:533px;width:159px;height:21px;background:#f6f6f6"></div>
<div class="a" style="left:179px;top:533px;width:40px;height:20px;background:#f6f6f6;border-left:1px solid #d8d8d8;border-right:1px solid #555;border-bottom:2px solid #555"></div>
<svg style="left:0;top:0" width="1560" height="720"><rect x="183.5" y="537.5" width="11" height="10" fill="#e6ecc0" stroke="#5878b8"/><rect x="184" y="538" width="10" height="2" fill="#6a90d8"/><path d="M186 541v5M188 542h4M188 544h4" stroke="#8a9a30" stroke-width=".8"/><path d="M222 540l6-3 6 3-2 7-5 2-5-3z" fill="#8a7ad8" stroke="#6858b8" stroke-width=".8"/><circle cx="229" cy="545" r="3" fill="#4a90e0"/><path d="M300 539q-2 4.5 0 9M302.5 539q2 4.5 0 9" stroke="#222" stroke-width="1.3" fill="none"/><path d="M304 546.5h3" stroke="#2a6ad0" stroke-width="1.5"/><path d="M306.5 544l2.5 2.5-2.5 2.5z" fill="#2a6ad0"/><path d="M260 545m0 0" /></svg>
<div class="t" style="left:196px;top:539px;font-size:10px;color:#222">Pr...</div>
<div class="t" style="left:236px;top:539px;font-size:10px;color:#aaa">B...</div>
<div class="a" style="left:256px;top:537px;width:1px;height:13px;background:#d0d0d0"></div>
<div class="t" style="left:262px;top:538px;font-size:10px;color:#222;font-weight:bold;letter-spacing:-1px">{ }</div>
<div class="t" style="left:275px;top:539px;font-size:10px;color:#aaa">F...</div>
<div class="a" style="left:294px;top:537px;width:1px;height:13px;background:#d0d0d0"></div>
<div class="t" style="left:313px;top:539px;font-size:10px;color:#aaa">Te...</div>
<div class="a" style="left:333px;top:537px;width:1px;height:13px;background:#d0d0d0"></div>
<div class="a" style="left:337px;top:85px;width:1121px;height:472px;background:#fbfbfb"></div>
<div class="a" style="left:341px;top:85px;width:1117px;height:20px;background:#f5f5f5;border-top:1px solid #cfcfcf"></div>
<svg style="left:0;top:0" width="1560" height="720"><path d="M345 104.5L361 88h64v16.5z" fill="#c9d6ec"/><path d="M426 88h101v16.5h-101z" fill="#fbe08f"/><path d="M528 88h113v16.5h-113z" fill="#c8d6b4"/><path d="M642 88h108v16.5h-108z" fill="#f0b2b2"/><path d="M381 103.3h39" stroke="#111" stroke-width="1.6"/><path d="M1427 93.5h7.5l-3.75 4z" fill="#111"/><path d="M1444.5 92.5l6 6M1450.5 92.5l-6 6" stroke="#111" stroke-width="1.4"/></svg>
<svg style="left:0;top:0" width="1560" height="720"><path d="M366.5 90.5h7l3 3v9.5h-10z" fill="#e8ecf6" stroke="#56688a"/><path d="M367.5 91.5h5.5l2.5 2.5v8h-8z" fill="url(#fg)"/></svg><svg style="left:0;top:0" width="1560" height="720"><path d="M433.5 90.5h7l3 3v9.5h-10z" fill="#e8ecf6" stroke="#56688a"/><path d="M434.5 91.5h5.5l2.5 2.5v8h-8z" fill="url(#fg)"/></svg><svg style="left:0;top:0" width="1560" height="720"><circle cx="436.5" cy="91" r="2.6" fill="#f0e040" stroke="#807010" stroke-width=".9"/><circle cx="436.5" cy="91" r=".9" fill="#807010"/><path d="M439 90h5.5v2h-1v1.5h-1.2v-1.5h-1v1h-1.2v-1h-1.1z" fill="#e8d830" stroke="#807010" stroke-width=".6"/></svg><svg style="left:0;top:0" width="1560" height="720"><path d="M536.5 90.5h7l3 3v9.5h-10z" fill="#e8ecf6" stroke="#56688a"/><path d="M537.5 91.5h5.5l2.5 2.5v8h-8z" fill="url(#fg)"/></svg><svg style="left:0;top:0" width="1560" height="720"><circle cx="539.5" cy="91" r="2.6" fill="#f0e040" stroke="#807010" stroke-width=".9"/><circle cx="539.5" cy="91" r=".9" fill="#807010"/><path d="M542 90h5.5v2h-1v1.5h-1.2v-1.5h-1v1h-1.2v-1h-1.1z" fill="#e8d830" stroke="#807010" stroke-width=".6"/></svg><svg style="left:0;top:0" width="1560" height="720"><path d="M649.5 90.5h7l3 3v9.5h-10z" fill="#e8ecf6" stroke="#56688a"/><path d="M650.5 91.5h5.5l2.5 2.5v8h-8z" fill="url(#fg)"/></svg><svg style="left:0;top:0" width="1560" height="720"><circle cx="652.5" cy="91" r="2.6" fill="#f0e040" stroke="#807010" stroke-width=".9"/><circle cx="652.5" cy="91" r=".9" fill="#807010"/><path d="M655 90h5.5v2h-1v1.5h-1.2v-1.5h-1v1h-1.2v-1h-1.1z" fill="#e8d830" stroke="#807010" stroke-width=".6"/></svg>
<div class="t" style="left:383px;top:92px;font-size:9.6px;font-weight:bold;color:#1a1a1a">main.c*</div>
<div class="t" style="left:452px;top:92px;font-size:9.3px;color:#222">stm32f10x_rcc.h</div>
<div class="t" style="left:556px;top:92px;font-size:9.3px;color:#222">stm32f10x_gpio.h</div>
<div class="t" style="left:667px;top:92px;font-size:9.3px;color:#222">stm32f10x_gpio.c</div>
<div class="a" style="left:341px;top:104px;width:1117px;height:450px;background:#c9ced6"></div>
<div class="a" style="left:344px;top:105px;width:1112px;height:446px;background:#f2f2f2;border-left:1px solid #6c6c6c;border-top:2px solid #909094;border-bottom:1px solid #d6dae0"></div>
<div class="a" style="left:345px;top:107px;width:1111px;height:428px;background:#fff"></div>
<div class="a" style="left:345px;top:107px;width:52px;height:428px;background:#e9e9e9"></div>
<div class="a" style="left:397px;top:107px;width:11px;height:428px;background:#f5f5f5"></div>
<div class="a" style="left:360px;top:541px;width:675px;height:2px;background:#6e6e6e"></div>
<div class="a" style="left:409px;top:201px;width:1044px;height:13px;background:#e4fbe8"></div>
<svg style="left:0;top:0" width="1560" height="720"><path d="M349.5 204l7.5 8M357 204l-7.5 8" stroke="#c82020" stroke-width="2.2"/></svg>
<div class="ln" style="top:110.5px">1</div><div class="ln" style="top:123.8px">2</div><div class="ln" style="top:137.1px">3</div><div class="ln" style="top:150.5px">4</div><div class="ln" style="top:163.8px">5</div><div class="ln" style="top:177.1px">6</div><div class="ln" style="top:190.4px">7</div><div class="ln" style="top:203.7px">8</div><div class="ln" style="top:217.1px">9</div><div class="ln" style="top:230.4px">10</div><div class="ln" style="top:243.7px">11</div><div class="ln" style="top:257.0px">12</div><div class="ln" style="top:270.3px">13</div><div class="ln" style="top:283.7px">14</div><div class="ln" style="top:297.0px">15</div><div class="ln" style="top:310.3px">16</div><div class="ln" style="top:323.6px">17</div><div class="ln" style="top:336.9px">18</div><div class="ln" style="top:350.3px">19</div><div class="ln" style="top:363.6px">20</div><div class="ln" style="top:376.9px">21</div><div class="ln" style="top:390.2px">22</div><div class="ln" style="top:403.5px">23</div><div class="ln" style="top:416.9px">24</div><div class="ln" style="top:430.2px">25</div><div class="ln" style="top:443.5px">26</div><div class="ln" style="top:456.8px">27</div><div class="ln" style="top:470.1px">28</div><div class="ln" style="top:483.5px">29</div><div class="ln" style="top:496.8px">30</div><div class="ln" style="top:510.1px">31</div><div class="ln" style="top:523.4px">32</div>
<svg style="left:0;top:0" width="1560" height="720"><rect x="398.5" y="176.5" width="9" height="9" fill="#fff" stroke="#8a8a8a"/><path d="M400.5 181h5" stroke="#555"/><path d="M403.5 185.5v57M403.5 251.5v106" stroke="#6a6a6a"/><rect x="398.5" y="242.5" width="9" height="9" fill="#fff" stroke="#8a8a8a"/><path d="M400.5 247h5" stroke="#555"/><path d="M403.5 273.5h3" stroke="#6a6a6a"/></svg>
<div class="m" style="left:410px;top:110.5px"><span style="color:#8a8a5a">#include</span> <span style="color:#8a2a8a">"stm32f10x.h"</span></div>
<div class="m" style="left:676px;top:110.5px"><span style="color:#348c3a">// Device header</span></div>
<div class="m" style="left:410px;top:163.8px"><span style="color:#2020b0">int</span><span style="color:#1a1a1a"> main()</span></div>
<div class="m" style="left:410px;top:177.1px"><span style="color:#1a1a1a">{</span></div>
<div class="m" style="left:463px;top:190.4px"><span style="color:#1a1a1a">GPIOC-&gt;CRH = </span><span style="color:#2a9a9a">0x00300000</span><span style="color:#1a1a1a">;</span></div>
<div class="m" style="left:463px;top:203.7px"><span style="color:#1a1a1a">GPIOC-&gt;ODR = </span><span style="color:#2a9a9a">0x000020</span></div>
<div class="a" style="left:603px;top:202px;width:1px;height:12px;background:#111"></div>
<svg style="left:0;top:0" width="1560" height="720"><path d="M590 212.5l1.5-1.5 1.5 1.5 1.5-1.5 1.5 1.5 1.5-1.5 1.5 1.5 1.5-1.5 1.5 1.5" fill="none" stroke="#e04040" stroke-width=".8"/></svg>
<div class="m" style="left:410px;top:230.4px"><span style="color:#2020b0">while</span><span style="color:#1a1a1a">(</span><span style="color:#2a9a9a">1</span><span style="color:#1a1a1a">)</span></div>
<div class="m" style="left:436px;top:243.7px"><span style="color:#1a1a1a">{</span></div>
<div class="m" style="left:436px;top:270.3px"><span style="color:#1a1a1a">}</span></div>
<div class="m" style="left:410px;top:283.7px"><span style="color:#1a1a1a">}</span></div>
<div class="m" style="left:410px;top:376.9px"><span style="color:#348c3a">//      led_init();</span></div>
<div class="m" style="left:410px;top:390.2px"><span style="color:#348c3a">//      GPIO_SetBits(GPIOC,GPIO_Pin_13);</span></div>
<div class="m" style="left:763px;top:390.2px"><span style="color:#348c3a">//<span style="font-size:12.5px;position:relative;top:-1px">库函数点灯</span></span></div>
<div class="m" style="left:410px;top:430.2px"><span style="color:#348c3a">//      led_Register_init();</span></div>
<div class="m" style="left:757px;top:430.2px"><span style="color:#348c3a">//<span style="font-size:12.5px;position:relative;top:-1px">寄存器点灯</span></span></div>
<div class="m" style="left:410px;top:443.5px"><span style="color:#348c3a">//      GPIOC-&gt;ODR = 0x002000;</span></div>
<svg style="left:0;top:0" width="1560" height="720"><path d="M716 468.5h4M718 468.5v12M716 480.5h4" stroke="#222" stroke-width="1"/></svg>
<div class="a" style="left:178px;top:553px;width:1280px;height:4px;background:#f8f8f8"></div>
<div class="a" style="left:178px;top:557px;width:1280px;height:16px;background:linear-gradient(#c9d4e2,#dfe6ef)"></div>
<div class="t" style="left:181px;top:561px;font-size:9.6px;color:#222">Build Output</div>
<svg style="left:0;top:0" width="1560" height="720"><path d="M1431.5 562.5h4v4h-4z" fill="#333" stroke="#111"/><path d="M1434 563v3" stroke="#fff" stroke-width=".8"/><path d="M1430 566.5h7M1433.5 567v2.5" stroke="#111"/><rect x="1445" y="560" width="10" height="10" fill="#cc4a4a"/><path d="M1447.8 562.8l4.4 4.4M1452.2 562.8l-4.4 4.4" stroke="#fff" stroke-width="1.3"/></svg>
<div class="a" style="left:178px;top:573px;width:1280px;height:2px;background:#f2f4f6"></div>
<div class="a" style="left:180px;top:575px;width:1277px;height:70px;background:#f0f0f0;border-top:2px solid #9c9c9c;border-left:2px solid #8a8a8a;border-bottom:1px solid #3a3a3a"></div>
<div class="a" style="left:182px;top:577px;width:1258px;height:51px;background:#fff"></div>
<svg style="left:0;top:0" width="1560" height="720"><path d="M1442 588.5h9l-4.5-5z" fill="#a8a8a8"/><path d="M1442 618.5h9l-4.5 5z" fill="#a8a8a8"/><path d="M1436 634.5l-4-4.5v9z" fill="#a8a8a8"/><path d="M185 635.5l4-4.5v9z" fill="#a8a8a8"/></svg>
<div class="a" style="left:178px;top:645px;width:1280px;height:19px;background:#fbfbfb;border-top:1px solid #333"></div>
<div class="a" style="left:180px;top:644px;width:80px;height:20px;background:#f0f0f0;border-left:1px solid #e0e0e0;border-right:1px solid #444;border-bottom:2px solid #555"></div>
<svg style="left:0;top:0" width="1560" height="720"><rect x="184.5" y="648.5" width="11" height="10" fill="#f4f6fa" stroke="#5878b8"/><rect x="185" y="649" width="10" height="2" fill="#7a98d8"/><path d="M187 653h3M191 653h2M187 655h5" stroke="#5a6a90" stroke-width=".8"/><rect x="263.5" y="648.5" width="11" height="10" fill="#e8ecf6" stroke="#5878b8"/><rect x="264" y="649" width="10" height="2" fill="#7a98d8"/><circle cx="267" cy="653" r="2" fill="#e0c030"/><path d="M270 656l3-4 2 2" fill="#c050c0" stroke="#a040a0" stroke-width=".8"/></svg>
<div class="t" style="left:198px;top:650px;font-size:9.6px;color:#1a1a1a">Build Output</div>
<div class="t" style="left:278px;top:650px;font-size:9.6px;color:#9a9a9a">Browser</div>
<div class="a" style="left:318px;top:647px;width:1px;height:15px;background:#c8c8c8"></div>
<div class="a" style="left:178px;top:664px;width:1280px;height:17px;background:#efefef"></div>
<div class="a" style="left:993px;top:666px;width:1px;height:14px;background:#d6d6d6"></div>
<div class="a" style="left:1141px;top:666px;width:1px;height:14px;background:#d6d6d6"></div>
<div class="a" style="left:1255px;top:666px;width:1px;height:14px;background:#d6d6d6"></div>
<div class="a" style="left:1333px;top:666px;width:1px;height:14px;background:#d6d6d6"></div>
<div class="a" style="left:1356px;top:666px;width:1px;height:14px;background:#d6d6d6"></div>
<div class="a" style="left:1381px;top:666px;width:1px;height:14px;background:#d6d6d6"></div>
<div class="a" style="left:1408px;top:666px;width:1px;height:14px;background:#d6d6d6"></div>
<div class="a" style="left:1432px;top:666px;width:1px;height:14px;background:#d6d6d6"></div>
<div class="t" style="left:997px;top:669px;font-size:9.3px;color:#222">ULINK2/ME Cortex Debugger</div>
<div class="t" style="left:1259px;top:669px;font-size:9.3px;color:#222">L:8 C:30</div>
<div class="t" style="left:1337px;top:669px;font-size:8.8px;color:#a0a0a0">CAP</div>
<div class="t" style="left:1359px;top:669px;font-size:8.8px;color:#222">NUM</div>
<div class="t" style="left:1385px;top:669px;font-size:8.8px;color:#a0a0a0">SCRL</div>
<div class="t" style="left:1411px;top:669px;font-size:8.8px;color:#a0a0a0">OVR</div>
<div class="t" style="left:1436px;top:669px;font-size:8.8px;color:#a0a0a0">R/W</div>
<div class="a" style="left:178px;top:680px;width:1280px;height:40px;background:#e4d7eb;border-top:1px solid #d8cce0"></div>
<svg style="left:0;top:0" width="1560" height="720"><circle cx="205" cy="699" r="8.5" fill="#f09020"/><circle cx="203" cy="697" r="6" fill="#f8b030" opacity=".7"/><path d="M194.5 696a3 3 0 0 1 2.5-3.5a3.5 3.5 0 0 1 6.5-1a2.6 2.6 0 0 1 3 4.5z" fill="#d4e4f6" stroke="#9ab8dc" stroke-width=".6"/><path d="M203.5 707.5a3 3 0 0 1 2.5-3.5a3.5 3.5 0 0 1 6.5-1a2.6 2.6 0 0 1 3 4.5z" fill="#d4e4f6" stroke="#9ab8dc" stroke-width=".6"/><defs><linearGradient id="wg" x1="0" y1="0" x2="1" y2="1"><stop offset="0" stop-color="#3cc4f4"/><stop offset="1" stop-color="#1878d8"/></linearGradient><linearGradient id="eg" x1="0" y1="0" x2="1" y2="1"><stop offset="0" stop-color="#50d070"/><stop offset=".5" stop-color="#20a0e0"/><stop offset="1" stop-color="#1050b0"/></linearGradient></defs><g fill="url(#wg)"><rect x="533" y="691" width="9" height="9"/><rect x="543" y="691" width="9" height="9"/><rect x="533" y="701" width="9" height="9"/><rect x="543" y="701" width="9" height="9"/></g><circle cx="578.5" cy="698" r="6" fill="none" stroke="#1a1a1a" stroke-width="1.8"/><path d="M583 702.5l5 5" stroke="#1a1a1a" stroke-width="2"/><rect x="612" y="691" width="14" height="14" fill="#f8f8f8" stroke="#d8d8d8" stroke-width=".6"/><rect x="607" y="697" width="14" height="12" fill="#1a1a1a"/><rect x="612" y="697" width="9" height="8" fill="#9a9a9a"/><rect x="643" y="690" width="20" height="20" rx="4" fill="#e41e2a"/><text x="645.5" y="704.5" font-size="11" font-weight="bold" fill="#fff" font-family="Liberation Sans">yd</text><path d="M680 693h7l2 2h11v14h-20z" fill="#e8b830"/><rect x="680" y="696" width="20" height="13" fill="#f8d458"/><rect x="684" y="704" width="12" height="3" fill="#2a78d0"/><path d="M732 690l4 2v16l-4 2-11-10-4 3-1.5-1v-8l1.5-1 4 3z" fill="#2a8ae0"/><path d="M732 695l-6.5 5 6.5 5z" fill="#e6d8ea"/><path d="M716 694l14 12M716 706l14-12" stroke="#1a6ac0" stroke-width="1.5" opacity=".5"/><circle cx="763" cy="700" r="10" fill="url(#eg)"/><path d="M757 703a6 6 0 0 1 11-4.5h-7a4 4 0 0 0 6 5" fill="#e6f0fa"/><circle cx="799" cy="700" r="9" fill="#4a88c8"/><path d="M791 697q8 4 16 0M791 702q8 4 16 0M797 691q-3 9 0 18M802 691q3 9 0 18" stroke="#d8e8f8" stroke-width="1" fill="none"/><circle cx="805" cy="706" r="2.5" fill="#1a5ab0"/><path d="M830 706v-8l1-5 3 3h6l3-3 1 5v8z" fill="#1c2a48"/><path d="M830 705q-2 1 0 2" stroke="#1c2a48" fill="none"/><path d="M864 706l5-10 4 5 4-6 5 11z" fill="#9068d8"/><circle cx="876.5" cy="693" r="2.3" fill="#f8b830"/><circle cx="910" cy="699.5" r="7.5" fill="#6a6e78" stroke="#6a6e78" stroke-width="4" stroke-dasharray="3 2.2"/><circle cx="910" cy="699.5" r="4" fill="#1a6ad8" stroke="#d8e0f0" stroke-width="1.2"/><rect x="931" y="684" width="29" height="31.5" rx="3" fill="#f2ecf4" stroke="#e0d6e6" stroke-width=".8"/><rect x="937.5" y="691" width="18" height="18" rx="1.8" fill="#2f7440"/><path d="M940 692.8h13l-6.5 14.5z" fill="#eef8ea"/><path d="M945 694.5v6M948 694.5v4.5q0 1.5-3 1.5" fill="none" stroke="#2f7440" stroke-width="1.1"/><text x="949.5" y="707.8" font-size="6.5" fill="#eef8ea" font-family="Liberation Sans" font-weight="bold">5</text><rect x="940" y="713.5" width="13" height="2.2" rx="1" fill="#3a6ec8"/><rect x="974" y="691" width="18" height="18" rx="4" fill="#2a86e6"/><path d="M978 694l9 6-3 6-2-4-4-1z" fill="#fff"/><rect x="1011" y="691" width="18" height="18" rx="4" fill="#f88a28"/><rect x="1015.5" y="697" width="9" height="7" rx="1" fill="#fff"/><path d="M1018 697v-2M1022 697v-2" stroke="#fff"/><path d="M1047 694h5l2 6 2-6h2l2 6 2-6h5l-5 12h-3l-2-5-2 5h-3z" fill="#e02a2a"/><rect x="1084" y="691" width="18" height="18" rx="2" fill="#f4f4f4" stroke="#ccc" stroke-width=".6"/><path d="M1086 707q2-12 10-14q-6 6-4 14z" fill="#30a040"/><path d="M1093 693q8 2 8 14h-5q0-8-3-14z" fill="#d83030"/><rect x="688" y="713.5" width="5" height="2.2" rx="1" fill="#8a8490"/><rect x="725" y="713.5" width="5" height="2.2" rx="1" fill="#8a8490"/><rect x="761" y="713.5" width="5" height="2.2" rx="1" fill="#8a8490"/><rect x="871" y="713.5" width="5" height="2.2" rx="1" fill="#8a8490"/><rect x="908" y="713.5" width="5" height="2.2" rx="1" fill="#8a8490"/><rect x="981" y="713.5" width="5" height="2.2" rx="1" fill="#8a8490"/><rect x="1018" y="713.5" width="5" height="2.2" rx="1" fill="#8a8490"/><rect x="1054" y="713.5" width="5" height="2.2" rx="1" fill="#8a8490"/><rect x="1091" y="713.5" width="5" height="2.2" rx="1" fill="#8a8490"/><path d="M1178 703l4.5-4.5 4.5 4.5" fill="none" stroke="#222" stroke-width="1.4"/><path d="M1203 704a3 3 0 0 1 1-6a4.5 4.5 0 0 1 8 1a2.6 2.6 0 0 1 1 5z" fill="#f0f0f0" stroke="#333" stroke-width="1.2"/><path d="M1229 694l6-2.5 6 2.5v5q0 5-6 8q-6-3-6-8z" fill="#2a8ae0"/><path d="M1237 708l3.5-7 3.5 7z" fill="#f8c820"/><path d="M1240.5 703v2.5" stroke="#222"/><rect x="1259" y="692" width="6" height="10" rx="3" fill="none" stroke="#3a6ad0" stroke-width="1.5"/><path d="M1257 699q0 5 5 5q5 0 5-5M1262 704v4" fill="none" stroke="#3a6ad0" stroke-width="1.3"/><path d="M1308 697q7-6 14 0M1310.5 700q4.5-4 9 0M1313 703q2-2 4 0" fill="none" stroke="#222" stroke-width="1.3"/><circle cx="1315" cy="705.5" r="1" fill="#222"/><path d="M1329 697h3l4-3v12l-4-3h-3z" fill="#f4f4f4" stroke="#333" stroke-width="1.1"/><path d="M1338 697q2 3 0 6M1340.5 695q3 5 0 10" fill="none" stroke="#999" stroke-width="1"/><rect x="1350" y="697" width="11" height="8" fill="#222"/><path d="M1361 699h2v4h-2" fill="#222"/><path d="M1348 693l5 4" stroke="#222" stroke-width="1.2"/><path d="M1431 708h10l-1.5-2.5v-5q0-5-3.5-5.5q-3.5.5-3.5 5.5v5z" fill="#222"/><circle cx="1436" cy="709.5" r="1.4" fill="#222"/><rect x="1436" y="693" width="6" height="6" fill="#e6d8ea"/><text x="1436" y="699" font-size="6" fill="#222" font-family="Liberation Sans">z</text></svg>
<div class="t" style="left:221px;top:689px;font-size:9.5px;color:#222">-13°C</div>
<div class="t" style="left:221px;top:702px;font-size:10px;color:#3a3a3a">局部晴朗</div>
<div class="t" style="left:1281px;top:693px;font-size:13px;color:#222">英</div>
<div class="t" style="left:1398px;top:689px;font-size:9.6px;color:#222">15:45</div>
<div class="t" style="left:1376px;top:703px;font-size:10.2px;color:#222">2024/1/23</div>
<div class="sub" style="left:164px;top:214px;width:218px;height:57px;background:linear-gradient(rgba(18,20,24,0),rgba(18,20,24,.06))"></div>
<div class="sub" style="left:164px;top:284px;width:443px;height:57px;background:linear-gradient(rgba(18,20,24,.2),rgba(18,20,24,.5))"></div>
<div class="sub" style="left:164px;top:353px;width:359px;height:57px;background:rgba(18,20,24,.5)"></div>
<div class="sub" style="left:164px;top:422px;width:443px;height:98px;background:rgba(18,20,24,.5)"></div>
<div class="subt" style="left:189px;top:300px"><span style="color:#cfcfcf">马龙睿<span lang="zh-TW">：</span></span>没问题，听不太懂罢了</div>
<div class="subt" style="left:189px;top:369px"><span style="color:#cfcfcf">秦正阳<span lang="zh-TW">：</span></span>有啊，难懂而已</div>
<div class="subt" style="left:189px;top:438px"><span style="color:#cfcfcf">马龙睿<span lang="zh-TW">：</span></span>是有的难懂，需要消化</div>
<div class="subt" style="left:189px;top:478px">一下</div>
</body></html>
